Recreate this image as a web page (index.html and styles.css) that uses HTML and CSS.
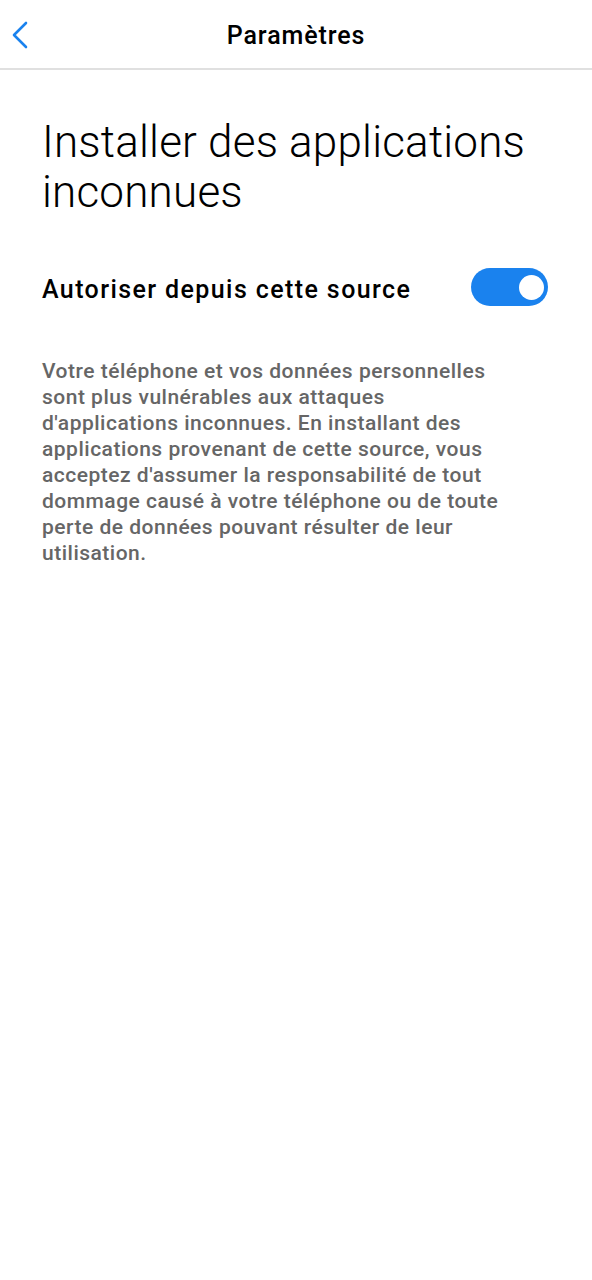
FILE: index.html
```html
<!DOCTYPE html>
<html lang="fr">
<head>
<meta charset="utf-8">
<title>Paramètres</title>
<link rel="stylesheet" href="styles.css">
</head>
<body>
<header class="topbar">
  <button class="back" aria-label="Retour">
    <svg width="20" height="30" viewBox="0 0 20 30"><path d="M16 3 L4 15 L16 27" fill="none" stroke="#1a82ee" stroke-width="2.6" stroke-linecap="round" stroke-linejoin="round"/></svg>
  </button>
  <h1 class="topbar-title">Paramètres</h1>
</header>
<main class="content">
  <h2 class="page-title">Installer des applications inconnues</h2>
  <div class="setting-row">
    <span class="setting-label">Autoriser depuis cette source</span>
    <span class="toggle on"><span class="knob"></span></span>
  </div>
  <p class="description">Votre téléphone et vos données personnelles sont plus vulnérables aux attaques d'applications inconnues. En installant des applications provenant de cette source, vous acceptez d'assumer la responsabilité de tout dommage causé à votre téléphone ou de toute perte de données pouvant résulter de leur utilisation.</p>
</main>
</body>
</html>
```
FILE: styles.css
```css
* { box-sizing: border-box; }
html, body { margin: 0; padding: 0; background: #fff; }
body { font-family: Roboto, "Noto Sans", sans-serif; color: #000; width: 592px; }

.topbar {
  position: relative;
  height: 70px;
  border-bottom: 2px solid #e0e0e0;
  display: flex;
  align-items: center;
  justify-content: center;
}
.back {
  position: absolute;
  left: 8px;
  top: 20px;
  border: 0;
  background: none;
  padding: 0;
  width: 24px;
  height: 30px;
}
.topbar-title {
  margin: 3px 0 0 0;
  font-size: 25px;
  font-weight: 500;
  letter-spacing: 0.9px;
}

.content { padding: 47px 42px 0 42px; }

.page-title {
  margin: 0;
  font-size: 44px;
  line-height: 50px;
  font-weight: 300;
  letter-spacing: 0.2px;
}

.setting-row {
  margin-top: 51px;
  display: flex;
  align-items: center;
  justify-content: space-between;
  height: 38px;
}
.setting-label {
  padding-top: 4px;
  font-size: 25px;
  font-weight: 500;
  letter-spacing: 1.4px;
}
.toggle {
  width: 77px;
  height: 38px;
  border-radius: 19px;
  background: #1a82ee;
  display: flex;
  align-items: center;
  justify-content: flex-end;
  padding-right: 3px;
  margin-right: 2px;
}
.knob {
  width: 25px;
  height: 25px;
  border-radius: 50%;
  background: #fff;
  margin-right: 1px;
}

.description {
  margin: 52px 0 0 0;
  max-width: 470px;
  font-size: 21px;
  line-height: 26px;
  font-weight: 500;
  letter-spacing: 0.5px;
  color: #666;
}
```
